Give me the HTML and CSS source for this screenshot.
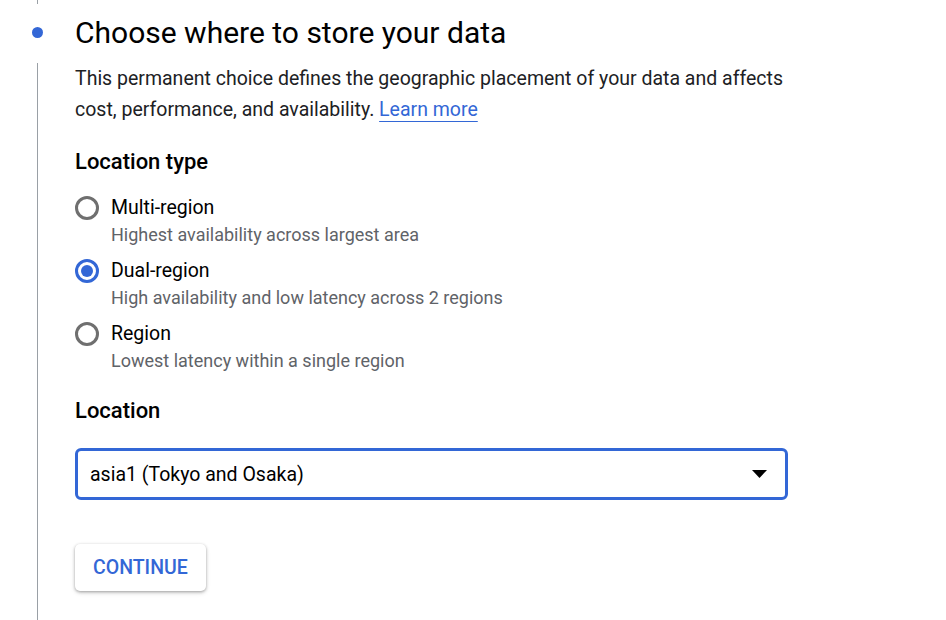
FILE: index.html
```html
<!DOCTYPE html>
<html lang="en">
<head>
  <meta charset="UTF-8">
  <title>Create a bucket</title>
  <link rel="stylesheet" href="styles.css">
</head>
<body>

<div class="step">
  <div class="step-rail">
    <div class="rail-line rail-top"></div>
    <div class="rail-dot"></div>
    <div class="rail-line rail-rest"></div>
  </div>

  <div class="step-body">
    <h2 class="step-title">Choose where to store your data</h2>
    <p class="step-desc">
      This permanent choice defines the geographic placement of your data and affects
      cost, performance, and availability. <a href="#" class="learn-link">Learn more</a>
    </p>

    <h3 class="field-title">Location type</h3>
    <div class="radio-group">
      <label class="radio-row">
        <span class="radio-circle"></span>
        <span class="radio-text">
          <span class="radio-label">Multi-region</span>
          <span class="radio-hint">Highest availability across largest area</span>
        </span>
      </label>
      <label class="radio-row checked">
        <span class="radio-circle"></span>
        <span class="radio-text">
          <span class="radio-label">Dual-region</span>
          <span class="radio-hint">High availability and low latency across 2 regions</span>
        </span>
      </label>
      <label class="radio-row">
        <span class="radio-circle"></span>
        <span class="radio-text">
          <span class="radio-label">Region</span>
          <span class="radio-hint">Lowest latency within a single region</span>
        </span>
      </label>
    </div>

    <h3 class="field-title location-title">Location</h3>
    <div class="select-box">
      <span class="select-value">asia1 (Tokyo and Osaka)</span>
      <svg class="select-arrow" width="15" height="8" viewBox="0 0 15 8">
        <path d="M0 0 L15 0 L7.5 8 Z" fill="#000"/>
      </svg>
    </div>

    <button class="continue-btn">CONTINUE</button>
  </div>
</div>

</body>
</html>
```

FILE: styles.css
```css
body {
  margin: 0;
  background: #fff;
  font-family: Roboto, 'Noto Sans', Arial, sans-serif;
  color: #202124;
}

.step {
  display: flex;
  height: 620px;
}

.step-rail {
  width: 75px;
  display: flex;
  flex-direction: column;
  align-items: center;
  flex-shrink: 0;
}

.rail-line {
  width: 1px;
  background: #9aa0a6;
}

.rail-top {
  height: 4px;
}

.rail-dot {
  width: 11px;
  height: 11px;
  border-radius: 50%;
  background: #3367d6;
  margin: 23px 0 25px;
}

.rail-rest {
  flex: 1;
}

.step-body {
  flex: 1;
  padding-top: 15px;
}

.step-title {
  margin: 0;
  font-size: 30px;
  line-height: 36px;
  font-weight: 400;
  color: #000;
}

.step-desc {
  margin: 12px 0 0;
  font-size: 19.5px;
  line-height: 31px;
  color: #202124;
  max-width: 712px;
}

.learn-link {
  color: #3367d6;
  text-decoration: underline;
  text-decoration-thickness: 1px;
  text-underline-offset: 5px;
}

.field-title {
  margin: 23px 0 0;
  font-size: 22px;
  line-height: 28px;
  font-weight: 500;
  color: #000;
}

.radio-group {
  display: flex;
  flex-direction: column;
  gap: 9px;
  margin-top: 19px;
}

.radio-row {
  display: flex;
  align-items: flex-start;
  gap: 12px;
}

.radio-circle {
  width: 18px;
  height: 18px;
  border: 3px solid #6f6f6f;
  border-radius: 50%;
  margin-top: 1px;
  position: relative;
  flex-shrink: 0;
}

.radio-row.checked .radio-circle {
  border-color: #3367d6;
}

.radio-row.checked .radio-circle::after {
  content: "";
  position: absolute;
  top: 3px;
  left: 3px;
  width: 12px;
  height: 12px;
  border-radius: 50%;
  background: #3367d6;
}

.radio-text {
  display: flex;
  flex-direction: column;
}

.radio-label {
  font-size: 19.5px;
  line-height: 26px;
  color: #000;
}

.radio-hint {
  font-size: 18px;
  line-height: 28px;
  color: #5f6368;
}

.location-title {
  margin-top: 22px;
}

.select-box {
  box-sizing: border-box;
  width: 713px;
  height: 52px;
  margin-top: 23px;
  border: 3px solid #3367d6;
  border-radius: 6px;
  display: flex;
  align-items: center;
  justify-content: space-between;
  padding: 0 18px 0 12px;
}

.select-value {
  font-size: 19.5px;
  color: #000;
}

.continue-btn {
  display: block;
  margin-top: 44px;
  padding: 0 18px;
  height: 47px;
  border: none;
  border-radius: 5px;
  background: #fff;
  color: #3367d6;
  font-family: Roboto, Arial, sans-serif;
  font-size: 19.5px;
  font-weight: 500;
  box-shadow: 0 1px 3px rgba(0, 0, 0, 0.3), 0 2px 5px rgba(0, 0, 0, 0.12);
  cursor: pointer;
}
```
